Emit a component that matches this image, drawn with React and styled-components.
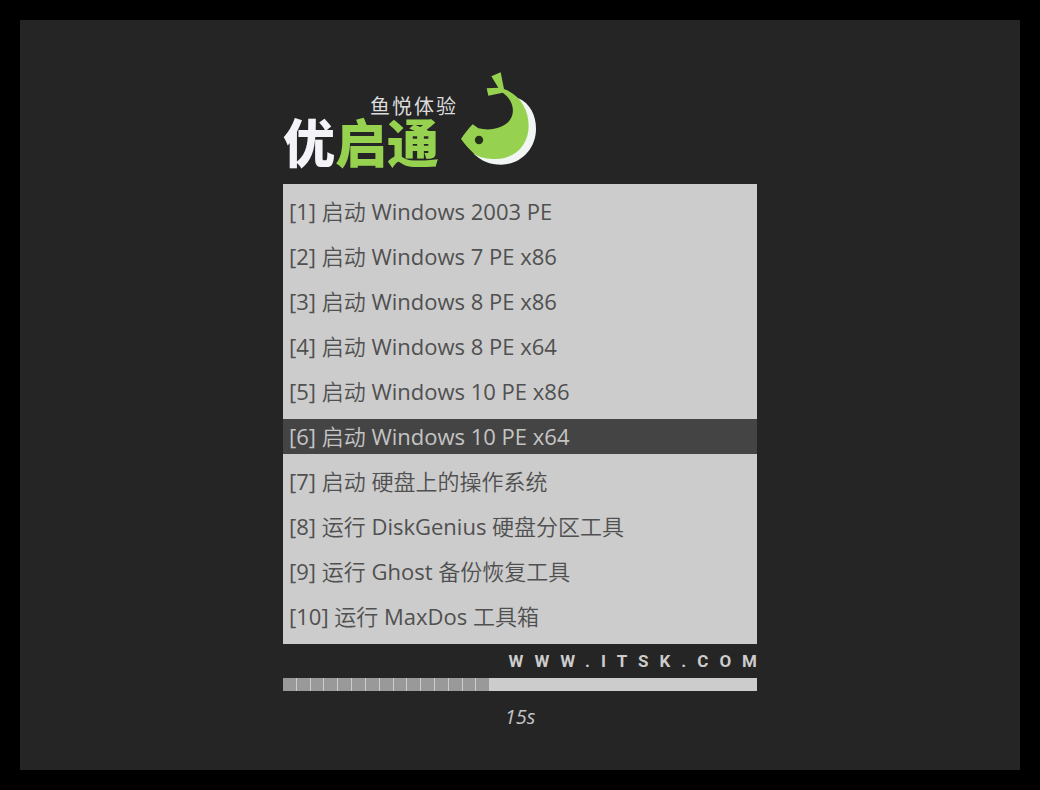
import React, { useState } from "react";
import styled, { createGlobalStyle } from "styled-components";

const GlobalStyle = createGlobalStyle`
  * { box-sizing: border-box; }
  body { margin: 0; background: #000; }
`;

const Screen = styled.div`
  min-height: 100vh;
  display: flex;
  justify-content: center;
  padding: 50px 20px 20px;
  border: 20px solid #000;
  background: #252525;
  font-family: "Open Sans", "Noto Sans CJK SC DemiLight", "Noto Sans CJK SC Light", "Noto Sans CJK SC", sans-serif;
`;

const Loader = styled.main`
  width: 100%;
  max-width: 474px;
`;

const Brand = styled.header`
  display: flex;
  align-items: flex-end;
  gap: 3px;
  height: 96px;
  margin-bottom: 18px;
`;

const BrandText = styled.div`
  width: 174px;
  font-family: "Noto Sans CJK SC", sans-serif;
`;

const Tagline = styled.p`
  margin: 0;
  padding-left: 87px;
  font-size: 20px;
  line-height: 20px;
  letter-spacing: 2px;
  white-space: nowrap;
  color: #dcdcdc;
`;

const Wordmark = styled.h1`
  margin: 0;
  font-family: "Noto Sans CJK SC Black", "Noto Sans CJK SC", sans-serif;
  font-size: 52px;
  line-height: 50px;
  font-weight: 900;
  white-space: nowrap;
  color: #96d250;
`;

const WordmarkLead = styled.span`
  color: #f3f3f8;
`;

const FishLogo = styled.svg`
  flex: none;
  width: 78px;
  height: 96px;
`;

const Menu = styled.ul`
  display: flex;
  flex-direction: column;
  gap: 10px;
  margin: 0;
  padding: 10px 0;
  list-style: none;
  background: #ccc;
`;

const MenuButton = styled.button`
  display: block;
  width: 100%;
  height: 35px;
  padding: 0 6px;
  border: 0;
  outline: 0;
  text-align: left;
  white-space: nowrap;
  font-family: inherit;
  font-size: 22px;
  line-height: 35px;
  color: ${(p) => (p.$active ? "#c4c4c4" : "#505050")};
  background: ${(p) => (p.$active ? "#444" : "transparent")};
`;

const SiteLine = styled.div`
  display: flex;
  justify-content: flex-end;
  height: 34px;
`;

const SiteLink = styled.a`
  margin-right: -11px;
  font-family: Roboto, sans-serif;
  font-size: 17px;
  line-height: 34px;
  font-weight: 700;
  letter-spacing: 11px;
  text-decoration: none;
  color: #ccc;
`;

const Track = styled.div`
  height: 13px;
  background: #ccc;
`;

const Fill = styled.div`
  display: flex;
  height: 100%;
`;

const Segment = styled.span`
  flex: 1;
  background: #999;
  & + & { border-left: 1px solid #ccc; }
`;

const Countdown = styled.p`
  margin: 12px 0 0;
  text-align: center;
  font-size: 20px;
  line-height: 28px;
  font-style: italic;
  color: #c4c4c4;
`;

const ENTRIES = [
  "启动 Windows 2003 PE",
  "启动 Windows 7 PE x86",
  "启动 Windows 8 PE x86",
  "启动 Windows 8 PE x64",
  "启动 Windows 10 PE x86",
  "启动 Windows 10 PE x64",
  "启动 硬盘上的操作系统",
  "运行 DiskGenius 硬盘分区工具",
  "运行 Ghost 备份恢复工具",
  "运行 MaxDos 工具箱",
];

const ELAPSED = 15;
const PERCENT = 43.5;

export default function App() {
  const [active, setActive] = useState(5);
  return (
    <>
      <GlobalStyle />
      <Screen>
        <Loader>
          <Brand>
            <BrandText>
              <Tagline>鱼悦体验</Tagline>
              <Wordmark lang="zh-CN">
                <WordmarkLead>优</WordmarkLead>启通
              </Wordmark>
            </BrandText>
            <FishLogo viewBox="60 30 234 288" aria-hidden="true">
              <path
                fill="#f1f5f4"
                d="M234 114C270 130 288 165 288 207C288 268 240 314 184 314C150 314 124 303 101 281L170 280L250 230L255 160Z"
              />
              <path
                fill="#96d250"
                d="M154 49L182 37L192 87C238 103 266 147 266 197C266 254 226 296 168 297C142 297 118 293 103 282C87 267 75 254 63 237C73 221 86 206 98 193L115 205C150 213 190 206 209 181C228 155 218 118 188 98L145 107L140 85L175 83Z"
              />
              <circle cx="117" cy="240" r="12.5" fill="#22301c" />
            </FishLogo>
          </Brand>
          <Menu>
            {ENTRIES.map((label, i) => (
              <li key={label}>
                <MenuButton
                  type="button"
                  $active={i === active}
                  aria-current={i === active}
                  onClick={() => setActive(i)}
                >
                  [{i + 1}] {label}
                </MenuButton>
              </li>
            ))}
          </Menu>
          <SiteLine>
            <SiteLink href="#itsk">WWW.ITSK.COM</SiteLink>
          </SiteLine>
          <Track
            role="progressbar"
            aria-label="15s"
            aria-valuemin={0}
            aria-valuemax={100}
            aria-valuenow={PERCENT}
          >
            <Fill style={{ width: `${PERCENT}%` }}>
              {Array.from({ length: ELAPSED }, (_, i) => (
                <Segment key={i} />
              ))}
            </Fill>
          </Track>
          <Countdown>{ELAPSED}s</Countdown>
        </Loader>
      </Screen>
    </>
  );
}
